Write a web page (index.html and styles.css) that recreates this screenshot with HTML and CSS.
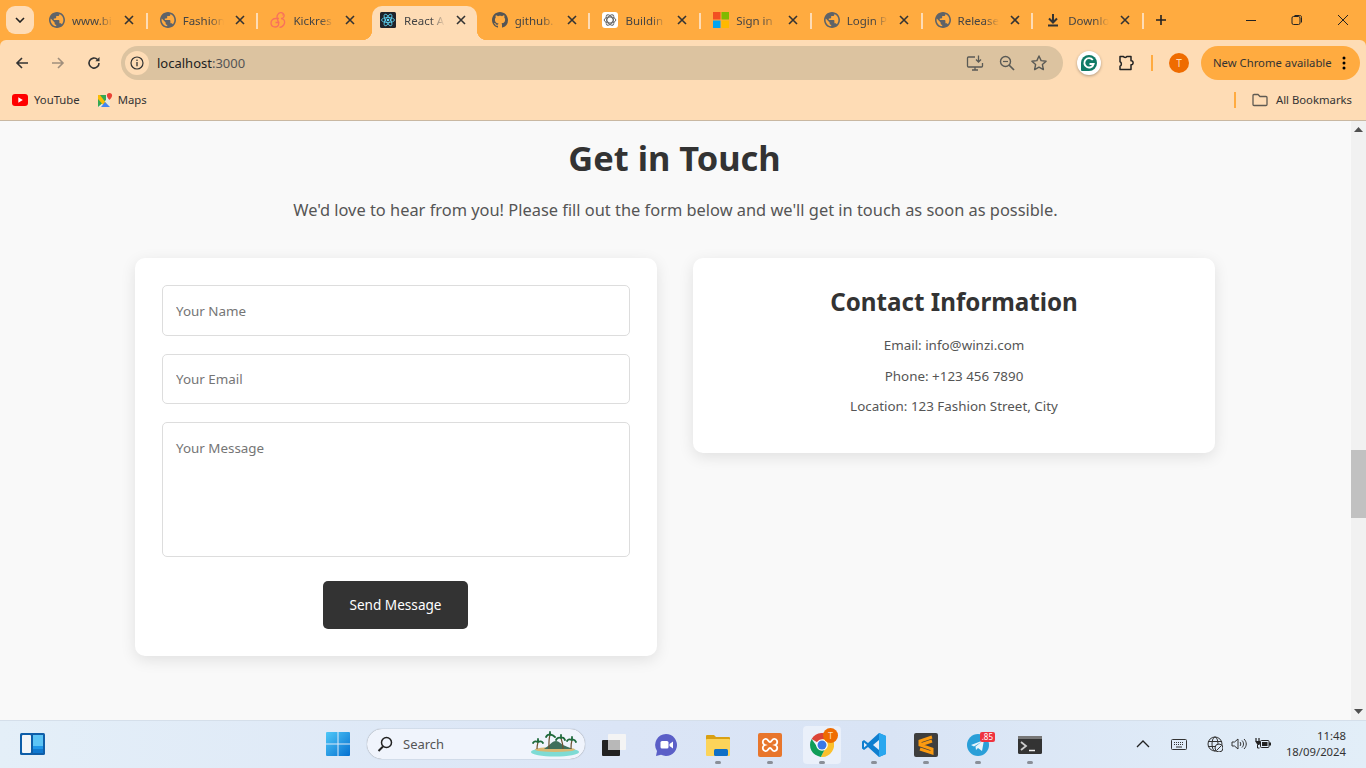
FILE: index.html
```html
<!DOCTYPE html>
<html lang="en">
<head>
    <meta charset="UTF-8">
    <title>React App</title>
    <link rel="stylesheet" href="styles.css">
</head>
<body>
    <svg class="defs" width="0" height="0">
        <symbol id="globe" viewBox="2 2 20 20">
            <path fill="#5f6368" fill-rule="evenodd" d="M12 2C6.48 2 2 6.48 2 12s4.48 10 10 10 10-4.48 10-10S17.52 2 12 2zm-1 17.93c-3.95-.49-7-3.85-7-7.93 0-.62.08-1.21.21-1.79L9 15v1c0 1.1.9 2 2 2v1.93zm6.9-2.54c-.26-.81-1-1.39-1.900-1.39h-1v-3c0-.55-.45-1-1-1H8v-2h2c.55 0 1-.45 1-1V7h2c1.100 0 2-.9 2-2v-.41c2.930 1.190 5 4.060 5 7.410 0 2.080-.8 3.970-2.100 5.390z"/>
        </symbol>
        <symbol id="close" viewBox="0 0 10 10">
            <path d="M1 1l8 8M9 1l-8 8" stroke="#333" stroke-width="1.600" fill="none"/>
        </symbol>
    </svg>

    <header class="chrome">
        <div class="tabstrip">
            <button class="tab-search">
                <svg width="10" height="6" viewBox="0 0 10 6"><path d="M1 1l4 4 4-4" stroke="#222" stroke-width="1.600" fill="none"/></svg>
            </button>
            <div class="tabs">
                <div class="tab sep"><svg class="fav"><use href="#globe"/></svg><span class="tab-title">www.bi</span><svg class="tab-close"><use href="#close"/></svg></div>
                <div class="tab sep"><svg class="fav"><use href="#globe"/></svg><span class="tab-title">Fashion</span><svg class="tab-close"><use href="#close"/></svg></div>
                <div class="tab"><svg class="fav" viewBox="0 0 16 16"><path d="M9 6.500H6C3 6.500 1 8.500 1 11s2 4 4.500 4S9 13 8.500 10.500 6 6 7.500 3 12 0 13.500 2s0 4.500-2.500 4.500c2.500 0 4 2 3.500 4.500s-2.500 4-5 4.500M5.500 10.500h4M12 3h.5" stroke="#f8705c" stroke-width="1.300" fill="none"/></svg><span class="tab-title">Kickres</span><svg class="tab-close"><use href="#close"/></svg></div>
                <div class="tab active">
                    <svg class="fav" viewBox="0 0 16 16"><rect width="16" height="16" rx="1.500" fill="#20232a"/><g fill="none" stroke="#61dafb" stroke-width=".8"><ellipse cx="8" cy="8" rx="6.500" ry="2.500"/><ellipse cx="8" cy="8" rx="6.500" ry="2.500" transform="rotate(60 8 8)"/><ellipse cx="8" cy="8" rx="6.500" ry="2.500" transform="rotate(120 8 8)"/></g><circle cx="8" cy="8" r="1.300" fill="#61dafb"/></svg>
                    <span class="tab-title">React A</span><svg class="tab-close"><use href="#close"/></svg>
                </div>
                <div class="tab sep"><svg class="fav" viewBox="0 0 16 16"><path fill="#555" d="M8 0C3.58 0 0 3.58 0 8c0 3.54 2.29 6.53 5.47 7.59.4.07.55-.17.55-.38 0-.19-.01-.82-.01-1.49-2.01.37-2.53-.49-2.69-.94-.09-.23-.48-.94-.82-1.13-.28-.15-.68-.52-.01-.53.63-.01 1.08.58 1.23.82.72 1.21 1.87.87 2.33.66.07-.52.28-.87.51-1.07-1.78-.2-3.64-.89-3.64-3.95 0-.87.31-1.59.82-2.15-.08-.2-.36-1.02.08-2.12 0 0 .67-.21 2.2.82.64-.18 1.32-.27 2-.27.68 0 1.36.09 2 .27 1.53-1.04 2.2-.82 2.2-.82.44 1.1.16 1.92.08 2.12.51.56.82 1.27.82 2.15 0 3.07-1.87 3.75-3.65 3.95.29.25.54.73.54 1.48 0 1.07-.01 1.93-.01 2.2 0 .21.15.46.55.38A8.013 8.013 0 0016 8c0-4.42-3.58-8-8-8z"/></svg><span class="tab-title">github.</span><svg class="tab-close"><use href="#close"/></svg></div>
                <div class="tab sep"><svg class="fav" viewBox="0 0 16 16"><rect width="16" height="16" rx="3" fill="#fff"/><g fill="none" stroke="#666" stroke-width="1"><ellipse cx="8" cy="8" rx="5.800" ry="3"/><ellipse cx="8" cy="8" rx="5.800" ry="3" transform="rotate(60 8 8)"/><ellipse cx="8" cy="8" rx="5.800" ry="3" transform="rotate(120 8 8)"/></g></svg><span class="tab-title">Buildin</span><svg class="tab-close"><use href="#close"/></svg></div>
                <div class="tab sep"><svg class="fav" viewBox="0 0 16 16"><rect width="7.500" height="7.500" fill="#f25022"/><rect x="8.500" width="7.500" height="7.500" fill="#7fba00"/><rect y="8.500" width="7.500" height="7.500" fill="#00a4ef"/><rect x="8.500" y="8.500" width="7.500" height="7.500" fill="#ffb900"/></svg><span class="tab-title">Sign in</span><svg class="tab-close"><use href="#close"/></svg></div>
                <div class="tab sep"><svg class="fav"><use href="#globe"/></svg><span class="tab-title">Login P</span><svg class="tab-close"><use href="#close"/></svg></div>
                <div class="tab sep"><svg class="fav"><use href="#globe"/></svg><span class="tab-title">Release</span><svg class="tab-close"><use href="#close"/></svg></div>
                <div class="tab sep"><svg class="fav" viewBox="0 0 16 16"><path d="M8 2v8M4 6.500L8 10.500 12 6.500" stroke="#333" stroke-width="2" fill="none"/><path d="M3 13.500h10" stroke="#333" stroke-width="2"/></svg><span class="tab-title">Downlo</span><svg class="tab-close"><use href="#close"/></svg></div>
            </div>
            <svg class="new-tab" width="12" height="12" viewBox="0 0 12 12"><path d="M6 1v10M1 6h10" stroke="#222" stroke-width="1.600"/></svg>
            <div class="win-controls">
                <svg width="12" height="12" viewBox="0 0 12 12"><path d="M1 6.500h10" stroke="#222"/></svg>
                <svg width="12" height="12" viewBox="0 0 12 12"><rect x="1" y="2.500" width="8" height="8" rx="1.500" fill="none" stroke="#222"/><path d="M3.500 1.500h5c1.500 0 2 .5 2 2v5" fill="none" stroke="#222"/></svg>
                <svg width="12" height="12" viewBox="0 0 12 12"><path d="M1 1l10 10M11 1L1 11" stroke="#222"/></svg>
            </div>
        </div>

        <div class="toolbar">
            <svg class="nav-btn" viewBox="0 0 14 14"><path d="M13 7H2M7 2L2 7l5 5" stroke="#333" stroke-width="1.600" fill="none"/></svg>
            <svg class="nav-btn" viewBox="0 0 14 14"><path d="M1 7h11M7 2l5 5-5 5" stroke="#a08f7c" stroke-width="1.600" fill="none"/></svg>
            <svg class="nav-btn" viewBox="0 0 14 14"><path d="M12 7a5 5 0 1 1-1.500-3.500" stroke="#333" stroke-width="1.600" fill="none"/><path d="M12.500 1v4.200H8.300z" fill="#333"/></svg>
            <div class="omnibox">
                <span class="site-info"><svg width="14" height="14" viewBox="0 0 14 14"><circle cx="7" cy="7" r="6" fill="none" stroke="#333" stroke-width="1.200"/><path d="M7 6v4.200" stroke="#333" stroke-width="1.300"/><circle cx="7" cy="4.200" r=".8" fill="#333"/></svg></span>
                <span class="url">localhost<span class="url-port">:3000</span></span>
                <svg class="omni-icon first" viewBox="0 0 18 18"><path d="M9 3H2.500a1 1 0 0 0-1 1v8a1 1 0 0 0 1 1h13a1 1 0 0 0 1-1V9M6 16h6M9 13v3" stroke="#5a5a55" stroke-width="1.300" fill="none"/><path d="M12.500 1.500v6M10 5.500l2.500 2.500L15 5.500" stroke="#5a5a55" stroke-width="1.300" fill="none"/></svg>
                <svg class="omni-icon" viewBox="0 0 18 18"><circle cx="7.500" cy="7.500" r="5" fill="none" stroke="#5a5a55" stroke-width="1.400"/><path d="M11 11l5 5" stroke="#5a5a55" stroke-width="1.700"/><path d="M5 7.500h5" stroke="#5a5a55" stroke-width="1.200"/></svg>
                <svg class="omni-icon" viewBox="0 0 18 18"><path d="M9 2l2.100 4.600 5 .6-3.700 3.400 1 5L9 13.100 4.600 15.600l1-5L1.900 7.200l5-.6z" fill="none" stroke="#5a5a55" stroke-width="1.400" stroke-linejoin="round"/></svg>
            </div>
            <span class="grammarly"><svg width="16" height="16" viewBox="0 0 16 16"><path d="M8 0a8 8 0 1 1 0 16H1a1 1 0 0 1-1-1V8a8 8 0 0 1 8-8z" fill="#0f7a66"/><path d="M11.800 5A4.700 4.700 0 1 0 12.600 9H8.500" fill="none" stroke="#fff" stroke-width="1.900"/></svg></span>
            <svg class="ext" width="18" height="18" viewBox="0 0 18 18"><path d="M3 2.500h3.500c.3 1.200 3 1.200 3.300 0H14v4.300c2.800-.4 2.800 4.400 0 4V15.500H3v-3.200c1.800-.5 1.800-4.100 0-4.600z" fill="none" stroke="#222" stroke-width="1.500" stroke-linejoin="round"/></svg>
            <span class="tool-sep"></span>
            <span class="avatar">T</span>
            <div class="update-pill">New Chrome available<svg width="4" height="14" viewBox="0 0 4 14"><circle cx="2" cy="2" r="1.500"/><circle cx="2" cy="7" r="1.500"/><circle cx="2" cy="12" r="1.500"/></svg></div>
        </div>

        <div class="bookmarks">
            <svg width="16" height="12" viewBox="0 0 16 12"><rect width="16" height="12" rx="3" fill="#f00"/><path d="M6.300 3.200l4.500 2.800-4.500 2.800z" fill="#fff"/></svg>
            <span class="bm-label">YouTube</span>
            <svg class="maps-icon" width="16" height="16" viewBox="0 0 16 16"><path d="M1 3h12v12H1z" fill="#e8e8e0"/><path d="M1 3h8v5L1 15z" fill="#34a853"/><path d="M1 3h2l9 12H8L1 7z" fill="#fbbc04"/><path d="M4 15l4-5 5 5z" fill="#4285f4"/><path d="M12.500 1a2.600 2.600 0 0 0-2.600 2.600c0 2 2.600 4.400 2.600 4.400s2.600-2.400 2.600-4.400A2.600 2.600 0 0 0 12.500 1z" fill="#ea4335"/></svg>
            <span class="bm-label maps">Maps</span>
            <span class="bm-sep"></span>
            <svg width="16" height="14" viewBox="0 0 16 14"><path d="M1 2.500a1 1 0 0 1 1-1h4l2 2h6a1 1 0 0 1 1 1v7a1 1 0 0 1-1 1H2a1 1 0 0 1-1-1z" fill="none" stroke="#5f5a52" stroke-width="1.300"/></svg>
            <span class="bm-label all">All Bookmarks</span>
        </div>
    </header>

    <div class="viewport">
        <main class="contact-page">
            <h1>Get in Touch</h1>
            <p class="lead">We'd love to hear from you! Please fill out the form below and we'll get in touch as soon as possible.</p>
            <div class="contact-grid">
                <form class="card contact-form">
                    <input class="name-input" type="text" placeholder="Your Name">
                    <input type="email" placeholder="Your Email">
                    <textarea placeholder="Your Message"></textarea>
                    <button type="button">Send Message</button>
                </form>
                <section class="card contact-info">
                    <h2>Contact Information</h2>
                    <p>Email: info@winzi.com</p>
                    <p>Phone: +123 456 7890</p>
                    <p>Location: 123 Fashion Street, City</p>
                </section>
            </div>
        </main>
        <div class="scrollbar">
            <svg width="9" height="5" viewBox="0 0 9 5"><path d="M4.500 0L9 5H0z" fill="#505050"/></svg>
            <span class="scroll-thumb"></span>
            <svg width="9" height="5" viewBox="0 0 9 5"><path d="M4.500 5L9 0H0z" fill="#505050"/></svg>
        </div>
    </div>

    <footer class="taskbar">
        <svg class="widgets" width="25" height="22" viewBox="0 0 25 22"><rect width="25" height="22" rx="1.500" fill="#0f5ea8"/><rect x="2" y="2" width="9" height="18" rx="1" fill="#f4f6f8"/><rect x="13" y="2" width="10" height="11" fill="#5cc4f5"/><rect x="13" y="13" width="10" height="3.500" fill="#1f96e8"/><rect x="13" y="16.500" width="10" height="3.500" fill="#0f78d0"/></svg>
        <svg class="start" width="24" height="24" viewBox="0 0 24 24"><defs><linearGradient id="win" x1="0" y1="0" x2="1" y2="1"><stop offset="0" stop-color="#4fc8f8"/><stop offset="1" stop-color="#0670d0"/></linearGradient></defs><path d="M0 1a1 1 0 0 1 1-1h10.500v11.500H0zM12.500 0H23a1 1 0 0 1 1 1v10.500H12.500zM0 12.500h11.500V24H1a1 1 0 0 1-1-1zM12.500 12.500H24V23a1 1 0 0 1-1 1H12.500z" fill="url(#win)"/></svg>
        <div class="task-search">
            <svg width="16" height="16" viewBox="0 0 16 16"><circle cx="9.500" cy="6.500" r="5" fill="none" stroke="#222" stroke-width="1.500"/><path d="M6 10.500L1.500 15" stroke="#222" stroke-width="2"/></svg>
            <span>Search</span>
            <svg class="island" width="50" height="26" viewBox="0 0 50 26">
                <ellipse cx="25" cy="21" rx="24" ry="4.500" fill="#7edbd4"/>
                <ellipse cx="25" cy="18.500" rx="20" ry="2.500" fill="#d9b873"/>
                <path d="M14 18c5-3 8-8 12-8 3 0 5 3 7 4s6 2 9 4z" fill="#3f6f5c"/>
                <g fill="none" stroke="#6e5230" stroke-width="1.200"><path d="M7 18c0-3 .5-5 1-7M19 18c0-5-.5-9 1-14M33 18c0-5-1-8-2-11M41 18c0-4 0-6 1-9"/></g>
                <g fill="none" stroke="#1f6a3c" stroke-width="1.800" stroke-linecap="round"><path d="M3 12c1-2 3-2 5-1 2-1 4-1 5 1M8 11V8M16 6c1-2 3-3 4-2 2-1 3 0 5 2M20 4V1M26 9c1-2 3-3 5-2 2-1 3 0 4 2M31 7V4M37 10c1-2 3-2 5-1 2-1 3 0 4 2M42 9V6"/></g>
            </svg>
        </div>
        <div class="task-apps">
            <span class="app"><svg width="24" height="22" viewBox="0 0 24 22"><rect x="6" y="0" width="18" height="16" rx="1" fill="#f4f4f4"/><rect x="0" y="6" width="18" height="16" rx="1" fill="#222"/><rect x="6" y="6" width="12" height="10" fill="#b8b8b8"/></svg></span>
            <span class="app"><svg width="24" height="24" viewBox="0 0 24 24"><path d="M12 1a11 11 0 1 1-5 20.800L2 23l1-5A11 11 0 0 1 12 1z" fill="#5b5fc7"/><rect x="6.500" y="8" width="8" height="7.500" rx="1.500" fill="#fff"/><path d="M15.500 11l3.500-2.500v7L15.500 13z" fill="#fff"/></svg></span>
            <span class="app open"><svg width="24" height="22" viewBox="0 0 24 22"><path d="M0 2a1 1 0 0 1 1-1h7l2 2h13a1 1 0 0 1 1 1v3H0z" fill="#d9a013"/><rect y="5" width="24" height="17" rx="1" fill="#fcd45a"/><rect x="8" y="15" width="14" height="7" rx="1.500" fill="#0f6fc6"/></svg></span>
            <span class="app"><svg width="24" height="24" viewBox="0 0 24 24"><rect width="24" height="24" rx="2" fill="#e8762c"/><path d="M7 6c3-1 3 3 5 3s2-4 5-3 3 5 0 6c3 1 3 5 0 6s-3-3-5-3-2 4-5 3-3-5 0-6c-3-1-3-5 0-6z" fill="none" stroke="#fff" stroke-width="1.800"/></svg></span>
            <span class="app current">
                <svg width="24" height="24" viewBox="0 0 24 24"><path d="M1.600 6a12 12 0 0 1 20.800 0L12 12z" fill="#db4437"/><path d="M12 6h10.400a12 12 0 0 1-11.600 17.900L16 14z" fill="#fbc02d"/><path d="M1.600 6a12 12 0 0 0 9.200 17.900L16 14l-8 1z" fill="#0f9d58"/><circle cx="12" cy="12" r="5.800" fill="#fff"/><circle cx="12" cy="12" r="4.500" fill="#3b78e7"/></svg>
                <span class="app-badge">T</span>
            </span>
            <span class="app"><svg width="24" height="24" viewBox="0 0 24 24"><path d="M17 0l7 3v18l-7 3L6 14l-4 3-2-1.500V8.500L2 7l4 3z" fill="#0f7fd0"/><path d="M17 0l7 3v18l-7 3z" fill="#2aa7ef"/><path d="M17 7l-6 5 6 5z" fill="#e6eef9"/><path d="M2 9.500L5 12l-3 2.500z" fill="#e6eef9"/></svg></span>
            <span class="app"><svg width="24" height="24" viewBox="0 0 24 24"><rect width="24" height="24" rx="2" fill="#3e3e3e"/><path d="M18 4L6 8v4l12 4v4L6 16M6 12l12-4" fill="none" stroke="#fb9a10" stroke-width="3"/></svg></span>
            <span class="app"><svg width="22" height="22" viewBox="0 0 22 22"><circle cx="11" cy="11" r="11" fill="#2a9fd8"/><path d="M4 11l13-5-2 11-4-3-2 2-.5-3.500L15 7.500 7 12.500z" fill="#e8f4fb"/></svg><span class="app-count">.85</span></span>
            <span class="app"><svg width="24" height="18" viewBox="0 0 24 18"><rect width="24" height="18" rx="1.500" fill="#333"/><rect width="24" height="3" fill="#777"/><path d="M3 6l5 4-5 4" fill="none" stroke="#ccc" stroke-width="1.800"/><path d="M11 14.500h6" stroke="#eee" stroke-width="1.500"/></svg></span>
        </div>
        <div class="tray">
            <svg class="tray-chevron" width="14" height="8" viewBox="0 0 14 8"><path d="M1 7l6-6 6 6" fill="none" stroke="#222" stroke-width="1.300"/></svg>
            <svg class="tray-kbd" width="16" height="11" viewBox="0 0 16 11"><rect x=".5" y=".5" width="15" height="10" rx="1" fill="none" stroke="#333"/><path d="M3 3.500h10M3 5.500h10" stroke="#333" stroke-dasharray="1 1"/><path d="M5 8h6" stroke="#333"/></svg>
            <svg class="tray-net" width="16" height="16" viewBox="0 0 16 16"><circle cx="8" cy="8" r="7" fill="none" stroke="#333"/><ellipse cx="8" cy="8" rx="3" ry="7" fill="none" stroke="#333"/><path d="M1 5.500h14M1 10.500h14" stroke="#333"/><circle cx="12" cy="12" r="4" fill="#dfeaf6" stroke="#333"/><path d="M9.500 14.500l5-5" stroke="#333"/></svg>
            <svg class="tray-vol" width="16" height="14" viewBox="0 0 16 14"><path d="M1 5h2.500L7 2v10L3.500 9H1z" fill="none" stroke="#333"/><path d="M9 5c1 1 1 3 0 4M11 3.500c2 2 2 5 0 7M13 2c3 3 3 7 0 10" fill="none" stroke="#333"/></svg>
            <svg class="tray-bat" width="16" height="12" viewBox="0 0 16 12"><path d="M1 0v3M4 0v3" stroke="#222" stroke-width="1.200"/><path d="M0 3h5v2.500a1.500 1.500 0 0 1-1.500 1.500H2.500z" fill="#222"/><path d="M2.500 7v3h2" stroke="#222" fill="none"/><rect x="5.500" y="2.500" width="8.500" height="7" rx="1" fill="none" stroke="#222"/><rect x="7" y="4" width="5.500" height="4" fill="#222"/><rect x="14" y="4.500" width="2" height="3" fill="#222"/></svg>
            <div class="clock"><span>11:48</span><span>18/09/2024</span></div>
        </div>
    </footer>
</body>
</html>
```

FILE: styles.css
```css
* {
    box-sizing: border-box;
}
html, body {
    margin: 0;
    height: 768px;
    overflow: hidden;
}
body {
    font-family: "Noto Sans", "Open Sans", sans-serif;
    background: #f9f9f9;
    display: flex;
    flex-direction: column;
}
.defs {
    position: absolute;
}

/* browser frame */
.chrome {
    height: 121px;
    background: linear-gradient(#ffab40 60px, #fedcb5 60px);
    border-bottom: 1px solid #c9b8a2;
    color: #333;
    font-size: 11.3px;
}
.tabstrip {
    height: 40px;
    background: #ffab40;
    display: flex;
    align-items: flex-start;
    padding-left: 6px;
}
.tab-search {
    width: 28px;
    height: 28px;
    margin-top: 6px;
    margin-right: 3px;
    padding: 0;
    border: none;
    border-radius: 9px;
    background: #fedcb5;
    display: flex;
    align-items: center;
    justify-content: center;
}
.tabs {
    display: flex;
}
.tab {
    width: 110.7px;
    height: 34px;
    margin-top: 6px;
    padding-left: 12px;
    display: flex;
    align-items: center;
    position: relative;
}
.tab.sep::after {
    content: "";
    position: absolute;
    right: 0;
    top: 7px;
    width: 2px;
    height: 16px;
    background: #fedcb5;
}
.tab.active {
    width: 104.7px;
    margin-left: 3px;
    margin-right: 3px;
    padding-left: 8px;
    background: #fedcb5;
    border-radius: 10px 10px 0 0;
}
.tab.active::before, .tab.active::after {
    content: "";
    position: absolute;
    bottom: 0;
    width: 10px;
    height: 10px;
}
.tab.active::before {
    left: -10px;
    background: radial-gradient(circle at 0 0, transparent 10px, #fedcb5 10.5px);
}
.tab.active::after {
    right: -10px;
    background: radial-gradient(circle at 100% 0, transparent 10px, #fedcb5 10.5px);
}
.fav {
    width: 16px;
    height: 16px;
    flex: none;
    margin-top: -6px;
}
.tab-title {
    width: 41px;
    margin-left: 7px;
    margin-top: -6px;
    overflow: hidden;
    white-space: nowrap;
    font-size: 11.5px;
    color: #444;
    -webkit-mask-image: linear-gradient(to right, #000 65%, transparent);
    mask-image: linear-gradient(to right, #000 65%, transparent);
}
.active .tab-title {
    margin-left: 8px;
}
.tab-close {
    width: 10px;
    height: 10px;
    margin-left: 11px;
    margin-top: -6px;
}
.new-tab {
    margin: 14px 0 0 11px;
}
.win-controls {
    margin-left: auto;
    margin-top: 14px;
    width: 104px;
    margin-right: 17px;
    display: flex;
    justify-content: space-between;
}
.toolbar {
    height: 46px;
    background: #fedcb5;
    border-radius: 6px 6px 0 0;
    display: flex;
    align-items: center;
    padding: 0 6px 0 15px;
}
.nav-btn {
    width: 14px;
    height: 14px;
    margin-right: 22px;
}
.omnibox {
    width: 942px;
    height: 34px;
    margin-left: -2px;
    border-radius: 17px;
    background: #dcc3a0;
    display: flex;
    align-items: center;
    padding-left: 4px;
    padding-right: 15px;
}
.site-info {
    width: 24px;
    height: 24px;
    border-radius: 50%;
    background: #fedcb5;
    display: flex;
    align-items: center;
    justify-content: center;
}
.url {
    margin-left: 8px;
    font-size: 13px;
    color: #222;
}
.url-port {
    color: #555;
}
.omni-icon {
    width: 18px;
    height: 18px;
    margin-left: 14px;
}
.omni-icon.first {
    margin-left: auto;
}
.grammarly {
    width: 24px;
    height: 24px;
    margin-left: 14px;
    border-radius: 50%;
    background: #fff;
    box-shadow: 0 1px 3px rgba(0, 0, 0, 0.3);
    display: flex;
    align-items: center;
    justify-content: center;
}
.ext {
    margin-left: 16px;
}
.tool-sep {
    width: 2px;
    height: 16px;
    margin-left: 16px;
    background: #ffab40;
}
.avatar {
    width: 20px;
    height: 20px;
    margin-left: 16px;
    border-radius: 50%;
    background: #ef6c00;
    color: #fedcb5;
    font-size: 10px;
    display: flex;
    align-items: center;
    justify-content: center;
}
.update-pill {
    width: 159px;
    height: 34px;
    margin-left: 12px;
    padding: 0 14px 1px 12px;
    border-radius: 17px;
    background: #ffab40;
    display: flex;
    align-items: center;
    justify-content: space-between;
    white-space: nowrap;
}
.bookmarks {
    height: 34px;
    padding: 0 14px 7px 12px;
    display: flex;
    align-items: center;
}
.bm-label {
    margin-left: 6px;
    margin-right: 17px;
}
.bm-label.maps {
    margin-left: 5px;
}
.bm-label.all {
    margin-left: 8px;
    margin-right: 0;
}
.bm-sep {
    width: 2px;
    height: 16px;
    margin-left: auto;
    margin-right: 16px;
    background: #ffab40;
}

/* page */
.viewport {
    height: 599px;
    display: flex;
}
.contact-page {
    flex: 1;
    padding: 14px 135px 0;
    text-align: center;
}
h1 {
    margin: 0;
    padding-right: 2px;
    font-size: 34.4px;
    line-height: 45px;
    color: #333;
}
.lead {
    margin: 16px 0 0;
    font-size: 16.4px;
    line-height: 28px;
    color: #555;
}
.contact-grid {
    margin: 34px 1px 0 0;
    display: grid;
    grid-template-columns: 522px 522px;
    gap: 36px;
    align-items: start;
}
.card {
    background: #fff;
    border-radius: 10px;
    box-shadow: 0 4px 15px rgba(0, 0, 0, 0.1);
}
.contact-form {
    height: 398px;
    padding: 27px;
    display: flex;
    flex-direction: column;
    align-items: center;
}
.contact-form input, .contact-form textarea {
    width: 468px;
    margin-bottom: 18px;
    padding: 0 13px;
    border: 1px solid #ddd;
    border-radius: 5px;
    background: #fff;
    font-family: inherit;
    font-size: 13.4px;
    color: #333;
    flex: none;
}
.contact-form input {
    height: 50px;
}
.contact-form .name-input {
    height: 51px;
}
.contact-form textarea {
    height: 135px;
    padding-top: 16px;
    margin-bottom: 24px;
    resize: none;
}
input::placeholder, textarea::placeholder {
    color: #757575;
}
.contact-form button {
    width: 145px;
    height: 48px;
    margin-right: 1px;
    padding-bottom: 3px;
    border: none;
    border-radius: 5px;
    background: #333;
    color: #fff;
    font-family: inherit;
    font-size: 13.6px;
}
.contact-info {
    height: 195px;
    padding-top: 26px;
}
.contact-info h2 {
    margin: 0 0 15px;
    font-size: 24.2px;
    line-height: 36px;
    color: #333;
}
.contact-info p {
    margin: 0 0 10.5px;
    font-size: 13.4px;
    line-height: 20px;
    color: #555;
}
.scrollbar {
    width: 15px;
    background: #f1f1f1;
    display: flex;
    flex-direction: column;
    align-items: center;
    padding: 6px 0;
}
.scroll-thumb {
    width: 15px;
    height: 68px;
    margin-top: 318px;
    margin-bottom: auto;
    background: #c1c1c1;
}

/* windows taskbar */
.taskbar {
    height: 48px;
    background: linear-gradient(to right, #e4eff8, #dbe5f6 45%, #d9e4f5 65%, #e2eef8);
    border-top: 1px solid #d5dfea;
    display: flex;
    align-items: center;
    padding-left: 20px;
    padding-bottom: 1px;
    color: #333;
}
.start {
    margin-left: 281px;
}
.task-search {
    width: 218px;
    height: 30px;
    margin-left: 17px;
    padding: 0 5px 0 10px;
    border-radius: 15px;
    background: #f0f4fc;
    box-shadow: 0 0 1px rgba(0, 0, 0, 0.5);
    display: flex;
    align-items: center;
    font-size: 13px;
    color: #555;
}
.task-search span {
    margin-left: 10px;
}
.island {
    margin-left: auto;
}
.task-apps {
    display: flex;
    margin-left: 3px;
}
.app {
    width: 52px;
    height: 38px;
    margin-top: 1px;
    display: flex;
    align-items: center;
    justify-content: center;
    position: relative;
}
.app.current {
    background: #eaf0fa;
    border-radius: 4px;
    width: 38px;
    margin: 1px 7px 0;
}
.app:not(:nth-child(1)):not(:nth-child(2))::after {
    content: "";
    position: absolute;
    bottom: 0;
    left: 50%;
    width: 6px;
    height: 3px;
    margin-left: -3px;
    border-radius: 2px;
    background: #8a8f98;
}
.app.current::after {
    width: 16px;
    margin-left: -8px;
    background: #0067c0;
}
.app-badge {
    position: absolute;
    top: 2px;
    right: 3px;
    width: 15px;
    height: 15px;
    border-radius: 50%;
    background: #ef6c00;
    color: #fedcb5;
    font-size: 9px;
    display: flex;
    align-items: center;
    justify-content: center;
}
.app-count {
    position: absolute;
    top: 6px;
    right: 9px;
    padding: 0 2px;
    border-radius: 2px;
    background: #ef3340;
    color: #fff;
    font-size: 8px;
    line-height: 10px;
}
.tray {
    margin-left: auto;
    padding-right: 20px;
    display: flex;
    align-items: center;
}
.tray-kbd {
    margin-left: 21px;
}
.tray-net {
    margin-left: 20px;
}
.tray-vol {
    margin-left: 8px;
}
.tray-bat {
    margin-left: 8px;
}
.clock {
    margin-left: 15px;
    display: flex;
    flex-direction: column;
    align-items: flex-end;
    font-size: 11.3px;
    line-height: 16px;
}
```
